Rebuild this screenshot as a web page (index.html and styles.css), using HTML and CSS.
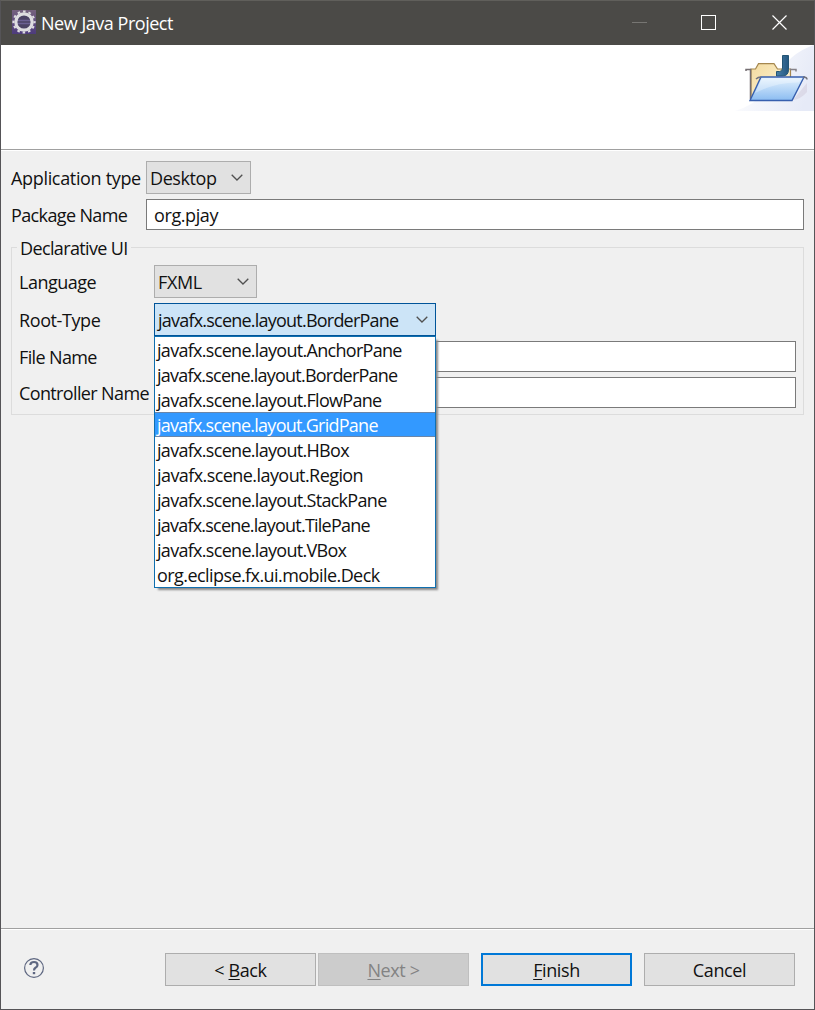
FILE: index.html
```html
<!DOCTYPE html>
<html lang="en">
<head>
<meta charset="utf-8">
<title>New Java Project</title>
<link rel="stylesheet" href="styles.css">
</head>
<body>
<div class="window">
  <header class="titlebar">
    <svg class="app-icon" width="24" height="24" viewBox="0 0 24 24">
      <defs><linearGradient id="app" x1="0" y1="0" x2="0" y2="1"><stop offset="0" stop-color="#75617e"/><stop offset="1" stop-color="#4d3b7c"/></linearGradient></defs>
      <rect width="24" height="24" fill="url(#app)"/>
      <circle cx="12" cy="12" r="7" fill="#4b4264"/>
      <path d="M5 10.5h14M5 13.5h14" stroke="#6b6093" stroke-width="1.5"/>
      <circle cx="12" cy="12" r="8.2" fill="none" stroke="#dedde0" stroke-width="3.2"/>
      <circle cx="12" cy="12" r="10.600" fill="none" stroke="#dedde0" stroke-width="2" stroke-dasharray="2.6 2.95" stroke-dashoffset="1.3"/>
    </svg>
    <span class="title">New Java Project</span>
    <svg class="controls" width="158" height="16" viewBox="0 0 158 16" fill="none">
      <path d="M0 7.5h15" stroke="#777673"/>
      <rect x="69.5" y=".5" width="14" height="14" stroke="#fff"/>
      <path d="M140.500 .5l14 14M154.500 .5l-14 14" stroke="#fff" stroke-width="1.2"/>
    </svg>
  </header>
  <section class="banner">
    <svg width="79" height="66" viewBox="0 0 79 66">
      <defs>
        <linearGradient id="haze" x1="0" y1=".2" x2="1" y2=".5"><stop offset="0" stop-color="#fff"/><stop offset="1" stop-color="#e6eaf7"/></linearGradient>
        <linearGradient id="back" x1="0" y1="0" x2="1" y2="1"><stop offset="0" stop-color="#f3dba0"/><stop offset="1" stop-color="#fff7dc"/></linearGradient>
        <linearGradient id="front" x1="0" y1="0" x2="0" y2="1"><stop offset="0" stop-color="#e6f3fe"/><stop offset="1" stop-color="#8bbcf1"/></linearGradient>
        <linearGradient id="jay" x1="0" y1="0" x2="1" y2="0"><stop offset="0" stop-color="#477fa8"/><stop offset="1" stop-color="#245780"/></linearGradient>
      </defs>
      <path d="M0 66Q25 59 40 34Q54 8 79 0V66Z" fill="url(#haze)"/>
      <path d="M58 55L72 38V47Q66 54 58 55Z" fill="#b9a7bb" opacity=".25"/>
      <path d="M16 55V24h4.500l3-5.300h15.500l3.500 5.300h13V55Z" fill="url(#back)" stroke="#a5874f" stroke-width="1.2"/>
      <path d="M11 26v-1.500h4.500V54" fill="none" stroke="#746e72" stroke-width="1.5"/>
      <path d="M55 24.500h6v2" fill="none" stroke="#858188" stroke-width="1.500"/>
      <path d="M47.500 10.500h6V24.500q0 6.500-6 6.500h-6v-4.500h3q3 0 3-3.500Z" fill="url(#jay)" stroke="#235575"/>
      <path d="M26 32h43L57 55.500H15Z" fill="url(#front)" stroke="#375fae" stroke-width="1.400"/>
      <path d="M27 33.500h39l-2 4Q42 37 20 48Z" fill="#fff" opacity=".3"/>
      <path d="M21 34q2-2 5-2M68 32q4 0 4 2.500" fill="none" stroke="#73737d" stroke-width="1.500"/>
    </svg>
  </section>
  <main class="content">
    <div class="row row-type"><label class="label t-app">Application type</label><div class="combo"><span>Desktop</span><svg class="chev" viewBox="0 0 12 7"><path d="M.7 .7L6 6L11.300 .7"/></svg></div></div>
    <div class="row row-package"><label class="label tight">Package Name</label><div class="field"><span>org.pjay</span></div></div>
    <fieldset class="group">
      <legend class="tight">Declarative UI</legend>
      <div class="row row-lang"><label class="label t-lang">Language</label><div class="combo"><span>FXML</span><svg class="chev" viewBox="0 0 12 7"><path d="M.7 .7L6 6L11.300 .7"/></svg></div></div>
      <div class="row row-root"><label class="label">Root-Type</label>
        <div class="combo open"><span class="tighter">javafx.scene.layout.BorderPane</span><svg class="chev" viewBox="0 0 12 7"><path d="M.7 .7L6 6L11.300 .7"/></svg>
          <ul class="menu">
            <li>javafx.scene.layout.AnchorPane</li>
            <li class="tighter">javafx.scene.layout.BorderPane</li>
            <li>javafx.scene.layout.FlowPane</li>
            <li class="selected">javafx.scene.layout.GridPane</li>
            <li>javafx.scene.layout.HBox</li>
            <li class="region">javafx.scene.layout.Region</li>
            <li>javafx.scene.layout.StackPane</li>
            <li class="tighter">javafx.scene.layout.TilePane</li>
            <li>javafx.scene.layout.VBox</li>
            <li class="region">org.eclipse.fx.ui.mobile.Deck</li>
          </ul>
        </div>
      </div>
      <div class="row row-file"><label class="label tight">File Name</label><div class="field"></div></div>
      <div class="row row-controller"><label class="label tight">Controller Name</label><div class="field"></div></div>
    </fieldset>
  </main>
  <footer class="footer">
    <svg class="help" width="22" height="22" viewBox="0 0 22 22" fill="none" stroke="#5e6781">
      <circle cx="11" cy="11" r="9.400" stroke-width="1.200"/>
      <path d="M7.300 8Q7.500 5 11 5Q14.500 5 14.500 8Q14.500 9.800 12.500 10.800Q11 11.700 11 13.500" stroke-width="2.200"/>
      <path d="M11 15v2.200" stroke-width="2.400"/>
    </svg>
    <button class="btn">&lt; <u>B</u>ack</button>
    <button class="btn disabled"><u>N</u>ext &gt;</button>
    <button class="btn primary"><u>F</u>inish</button>
    <button class="btn cancel">Cancel</button>
  </footer>
</div>
</body>
</html>
```
FILE: styles.css
```css
* { box-sizing: border-box; }
body { margin: 0; font: 18px/25px "Open Sans", "Noto Sans", sans-serif; letter-spacing: -0.4px; color: #111; }
.window { width: 815px; height: 1010px; border: 1px solid #555457; border-top-color: #605f5b; background: #f0f0f0; display: flex; flex-direction: column; }
.titlebar { height: 44px; flex: none; background: #4b4a47; color: #fff; display: flex; align-items: center; padding: 0 24px 0 11px; }
.app-icon { margin-top: -2px; }
.title { margin-left: 5px; white-space: nowrap; letter-spacing: -0.47px; padding-top: 1px; }
.controls { margin-left: auto; }
.banner { height: 105px; flex: none; background: #fff; border-bottom: 1px solid #a0a0a0; display: flex; justify-content: flex-end; }
.content { flex: 1; border-top: 1px solid #fff; padding: 10px 10px 0; }
.row { display: flex; align-items: center; white-space: nowrap; }
.label { width: 135px; flex: none; padding-top: 2px; }
.t-app { letter-spacing: -0.33px; }
.t-lang { letter-spacing: -0.5px; }
.tight { letter-spacing: -0.63px; }
.row-type { height: 33px; margin-bottom: 5px; }
.row-package { height: 31px; }
.combo { height: 33px; width: 105px; border: 1px solid #adadad; background: #e1e1e1; display: flex; align-items: center; justify-content: space-between; padding: 0 7px 0 3px; position: relative; }
.combo > span { padding-top: 2px; }
.chev { width: 12px; height: 7px; fill: none; stroke: #505050; stroke-width: 1.3; }
.field { flex: 1; height: 31px; border: 1px solid #7a7a7a; background: #fff; padding: 3px 7px 0; }
.group { height: 168px; margin: 17px 0 0; padding: 0 7px; border: 1px solid #dcdcdc; position: relative; min-width: 0; }
.group legend { float: left; height: 25px; margin: -12px 0 4px -2px; padding: 0 3px; background: #f0f0f0; }
.group .row { clear: both; }
.row-lang { height: 33px; }
.row-lang .combo { width: 103px; }
.row-root { height: 33px; margin-top: 5px; }
.combo.open { width: 282px; background: #cce4f7; border-color: #005499; }
.row-file { height: 31px; margin-top: 5px; }
.row-controller { height: 31px; margin-top: 5px; }
.menu { position: absolute; z-index: 2; top: 32px; left: -1px; width: 282px; margin: 0; padding: 0; list-style: none; background: #fff; border: 1px solid #0f6faf; box-shadow: 3px 3px 2px -1px #888; letter-spacing: -0.7px; }
.menu li { height: 25px; line-height: 27px; padding-left: 2px; }
.menu .selected { background: #3399ff; color: #fff; box-shadow: inset 0 1px #6b86a8, inset 0 -1px #6b86a8; }
.menu .region { letter-spacing: -0.57px; }
.menu .selected { letter-spacing: -0.74px; }
.tighter, .menu .tighter { letter-spacing: -0.78px; }
.footer { height: 81px; flex: none; border-top: 1px solid #a0a0a0; box-shadow: inset 0 1px #fff; display: flex; padding: 24px 19px 0 22px; }
.help { margin-top: 4px; }
.btn { width: 151px; height: 33px; padding: 2px 0 0; margin: 0 2px 0 0; border: 1px solid #adadad; background: #e1e1e1; color: #111; font: inherit; letter-spacing: inherit; text-align: center; }
.help + .btn { margin-left: auto; }
.btn u { text-underline-offset: 2px; text-decoration-thickness: 1px; text-decoration-skip-ink: none; }
.btn.disabled { background: #ccc; border-color: #bfbfbf; color: #838383; margin-right: 12px; }
.btn.primary { border: 2px solid #0078d7; margin-right: 12px; }
.btn.cancel { margin-right: 0; }
```
